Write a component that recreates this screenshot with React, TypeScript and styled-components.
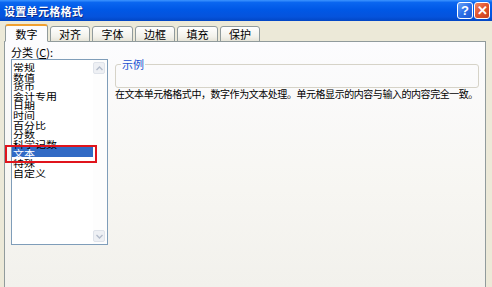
import React from 'react';
import styled, { createGlobalStyle } from 'styled-components';

const GlobalStyle = createGlobalStyle`
  body {
    margin: 0;
    background: #ece9d8;
    overflow: hidden;
  }
`;

const Window = styled.div`
  width: 492px;
  height: 287px;
  display: flex;
  flex-direction: column;
  background: #ece9d8;
  font-family: "Noto Sans CJK SC", "Liberation Sans", sans-serif;
  overflow: hidden;
`;

const TitleBar = styled.div`
  height: 21px;
  flex: none;
  display: flex;
  align-items: center;
  padding: 0 2px 0 4px;
  background: linear-gradient(
    #3d95ff 0%,
    #0a66f0 12%,
    #0058e6 45%,
    #0553dc 80%,
    #0246c4 100%
  );
`;

const Title = styled.div`
  flex: 1;
  color: #fff;
  font-size: 11px;
  font-weight: bold;
  letter-spacing: 0.3px;
  text-shadow: 1px 1px 0 #0a2a8a;
`;

const CaptionButton = styled.div<{ $close?: boolean }>`
  width: 16px;
  height: 17px;
  margin-left: 1px;
  box-sizing: border-box;
  border: 1px solid #fff;
  border-radius: 3px;
  display: flex;
  align-items: center;
  justify-content: center;
  color: #fff;
  font-family: "Liberation Sans", sans-serif;
  font-weight: bold;
  font-size: 13px;
  background: ${({ $close }) =>
    $close
      ? 'linear-gradient(135deg, #f08a6a 0%, #e2562e 45%, #c8401c 100%)'
      : 'linear-gradient(135deg, #6ba2f8 0%, #2b6fe8 50%, #1d56d0 100%)'};
`;

const Body = styled.div`
  flex: 1;
  display: flex;
  flex-direction: column;
  padding: 3px 6px 0 4px;
`;

const TabRow = styled.div`
  display: flex;
  align-items: flex-end;
  gap: 2px;
  height: 18px;
  padding-left: 1px;
  position: relative;
  z-index: 1;
  margin-bottom: -1px;
`;

const Tab = styled.div<{ $active?: boolean; $w: number }>`
  width: ${({ $w }) => $w}px;
  height: ${({ $active }) => ($active ? 18 : 16)}px;
  box-sizing: border-box;
  display: flex;
  align-items: center;
  justify-content: center;
  font-size: 11px;
  color: #000;
  border: 1px solid #919b9c;
  border-radius: 3px 3px 0 0;
  border-bottom: ${({ $active }) => ($active ? '1px solid #fcfcfe' : '1px solid #919b9c')};
  border-top: ${({ $active }) => ($active ? '2px solid #f0a030' : '1px solid #919b9c')};
  background: ${({ $active }) =>
    $active ? '#fcfcfe' : 'linear-gradient(#ffffff, #f2f1ea 70%, #e6e4d8)'};
`;

const Panel = styled.div`
  flex: 1;
  border: 1px solid #919b9c;
  border-bottom: none;
  background: linear-gradient(#fcfcfe 0%, #f7f6f2 60%, #f2f1ec 100%);
  display: grid;
  grid-template-columns: 97px 1fr;
  column-gap: 7px;
  padding: 4px 4px 0 6px;
`;

const Left = styled.div`
  display: flex;
  flex-direction: column;
`;

const Label = styled.div`
  font-size: 11px;
  height: 12px;
  line-height: 12px;
  color: #000;
  margin-bottom: 1px;
`;

const ListBox = styled.div`
  position: relative;
  width: 97px;
  height: 186px;
  box-sizing: border-box;
  border: 1px solid #7f9db9;
  background: #fff;
  display: flex;
`;

const Items = styled.div`
  flex: 1;
  padding-top: 1px;
`;

const Item = styled.div<{ $selected?: boolean }>`
  height: 9.6px;
  line-height: 9.6px;
  padding-left: 1px;
  white-space: nowrap;
  color: ${({ $selected }) => ($selected ? '#fff' : '#000')};
  background: ${({ $selected }) => ($selected ? '#316ac5' : 'transparent')};
`;

const ItemText = styled.span`
  display: inline-block;
  font-size: 11px;
  transform: scaleY(0.85);
  transform-origin: center;
`;

const ScrollBar = styled.div`
  width: 13px;
  display: flex;
  flex-direction: column;
  justify-content: space-between;
  padding: 2px 1px 2px 0;
  background: #fdfdfd;
`;

const ScrollButton = styled.div`
  width: 12px;
  height: 12px;
  box-sizing: border-box;
  border: 1px solid #dfe3ea;
  border-radius: 2px;
  background: #eef0f4;
  display: flex;
  align-items: center;
  justify-content: center;
`;

const Marker = styled.div`
  position: absolute;
  left: -7px;
  top: 85px;
  width: 92px;
  height: 18px;
  box-sizing: border-box;
  border: 2px solid #e0141c;
`;

const Right = styled.div`
  display: flex;
  flex-direction: column;
  padding-top: 13px;
  padding-right: 2px;
  min-width: 0;
`;

const Group = styled.fieldset`
  margin: 0;
  height: 29px;
  box-sizing: border-box;
  border: 1px solid #d6d3c8;
  border-radius: 3px;
  padding: 0 4px;
`;

const Legend = styled.legend`
  font-size: 11px;
  line-height: 10px;
  color: #1a4fd0;
  padding: 0 1px;
  margin-left: 1px;
`;

const Description = styled.div`
  margin-top: 0;
  font-size: 10px;
  letter-spacing: -0.45px;
  line-height: 12px;
  color: #000;
  white-space: nowrap;
`;

const Chevron = ({ up }: { up?: boolean }) => (
  <svg width="7" height="5" viewBox="0 0 7 5">
    <path
      d={up ? 'M0.5 4 L3.5 1 L6.5 4' : 'M0.5 1 L3.5 4 L6.5 1'}
      fill="none"
      stroke="#b4bccb"
      strokeWidth="1.4"
    />
  </svg>
);

const tabs = [
  { label: '数字', w: 43 },
  { label: '对齐', w: 40 },
  { label: '字体', w: 41 },
  { label: '边框', w: 40 },
  { label: '填充', w: 41 },
  { label: '保护', w: 40 },
];

const categories = [
  '常规',
  '数值',
  '货币',
  '会计专用',
  '日期',
  '时间',
  '百分比',
  '分数',
  '科学记数',
  '文本',
  '特殊',
  '自定义',
];

export default function App() {
  return (
    <Window>
      <GlobalStyle />
      <TitleBar>
        <Title>设置单元格格式</Title>
        <CaptionButton>?</CaptionButton>
        <CaptionButton $close>✕</CaptionButton>
      </TitleBar>
      <Body>
        <TabRow>
          {tabs.map((t, i) => (
            <Tab key={t.label} $w={t.w} $active={i === 0}>
              {t.label}
            </Tab>
          ))}
        </TabRow>
        <Panel>
          <Left>
            <Label>
              分类 (<u>C</u>):
            </Label>
            <ListBox>
              <Items>
                {categories.map((c) => (
                  <Item key={c} $selected={c === '文本'}>
                    <ItemText>{c}</ItemText>
                  </Item>
                ))}
              </Items>
              <ScrollBar>
                <ScrollButton>
                  <Chevron up />
                </ScrollButton>
                <ScrollButton>
                  <Chevron />
                </ScrollButton>
              </ScrollBar>
              <Marker />
            </ListBox>
          </Left>
          <Right>
            <Group>
              <Legend>示例</Legend>
            </Group>
            <Description>
              在文本单元格格式中，数字作为文本处理。单元格显示的内容与输入的内容完全一致。
            </Description>
          </Right>
        </Panel>
      </Body>
    </Window>
  );
}
